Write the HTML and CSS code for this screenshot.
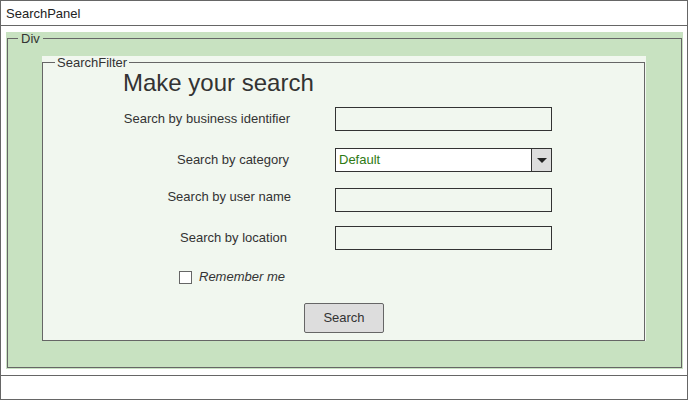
FILE: index.html
```html
<!DOCTYPE html>
<html>
<head>
<meta charset="utf-8">
<link rel="stylesheet" href="styles.css">
</head>
<body>
<div class="panel">
  <div class="panel-header">SearchPanel</div>
  <div class="panel-body">
    <div class="div-box">
      <fieldset class="div-fs">
        <legend>Div</legend>
        <div class="filter-box">
          <fieldset class="filter-fs">
            <legend>SearchFilter</legend>
            <h1 class="title">Make your search</h1>
            <div class="form">
              <div class="row r1"><span class="label">Search by business identifier</span><div class="input"></div></div>
              <div class="row r2"><span class="label">Search by category</span><div class="select"><span class="select-text">Default</span><span class="select-btn"><span class="tri"></span></span></div></div>
              <div class="row r3"><span class="label">Search by user name</span><div class="input"></div></div>
              <div class="row r4"><span class="label">Search by location</span><div class="input"></div></div>
              <div class="check-row"><span class="checkbox"></span><span class="check-label">Remember me</span></div>
              <div class="btn">Search</div>
            </div>
          </fieldset>
        </div>
      </fieldset>
    </div>
  </div>
  <div class="panel-footer"></div>
</div>
</body>
</html>
```

FILE: styles.css
```css
html, body {
  margin: 0;
  padding: 0;
  background: #ffffff;
}
body {
  font-family: "Liberation Sans", Arial, sans-serif;
  font-size: 13px;
  color: #333333;
}
.panel {
  width: 688px;
  height: 400px;
  box-sizing: border-box;
  border: 1px solid #666666;
  display: flex;
  flex-direction: column;
  background: #ffffff;
}
.panel-header {
  height: 24px;
  border-bottom: 1px solid #666666;
  padding-left: 5px;
  line-height: 26px;
  color: #222222;
  flex: none;
}
.panel-body {
  flex: 1;
  padding: 6px 4px 6px 5px;
  display: flex;
  flex-direction: column;
  min-height: 0;
}
.panel-footer {
  height: 23px;
  border-top: 1px solid #666666;
  flex: none;
}
.div-box {
  flex: 1;
  background: #c8e2c1;
  padding: 0 1px 1px 1px;
  display: flex;
  flex-direction: column;
}
.div-fs {
  flex: 1;
  margin: 0;
  border: 1px solid #666666;
  padding: 0 0 0 10px;
  min-width: 0;
}
.div-fs > legend,
.filter-fs > legend {
  padding: 0 3px;
  line-height: 13px;
  font-size: 13px;
  color: #333333;
}
.filter-box {
  margin: 11px 0 0 24px;
  width: 603px;
  background: #f1f7ef;
  padding-right: 1px;
}
.filter-fs {
  margin: 0;
  border: 1px solid #666666;
  padding: 0 0 7px 12px;
  min-width: 0;
}
.filter-fs > legend {
  padding: 0 2px;
}
.title {
  margin: 2px 0 0 68px;
  font-size: 24px;
  line-height: 24px;
  font-weight: normal;
  color: #333333;
}
.form {
  margin-top: 12px;
  display: flex;
  flex-direction: column;
}
.row {
  display: grid;
  grid-template-columns: 236px 217px;
  column-gap: 44px;
  height: 24px;
  align-items: center;
}
.r2 { margin-top: 17px; }
.r3 { margin-top: 16px; }
.r4 { margin-top: 14px; }
.label {
  text-align: right;
  line-height: 15px;
  padding-bottom: 2px;
  color: #333333;
}
.r1 .label { padding-right: 1px; }
.r2 .label { padding-right: 2px; }
.r3 .label { padding-bottom: 8px; }
.r4 .label { padding-right: 4px; }
.input {
  height: 24px;
  box-sizing: border-box;
  border: 1px solid #333333;
}
.select {
  height: 24px;
  box-sizing: border-box;
  border: 1px solid #333333;
  background: #ffffff;
  display: flex;
  align-items: stretch;
}
.select-text {
  flex: 1;
  padding-left: 3px;
  line-height: 22px;
  color: #2f7a14;
}
.select-btn {
  width: 19px;
  border-left: 1px solid #333333;
  background: #dddddd;
  display: flex;
  align-items: center;
  justify-content: center;
}
.tri {
  width: 0;
  height: 0;
  border-left: 5px solid transparent;
  border-right: 5px solid transparent;
  border-top: 5px solid #222222;
}
.check-row {
  margin-top: 15px;
  margin-left: 124px;
  height: 24px;
  display: flex;
  align-items: center;
}
.checkbox {
  width: 11px;
  height: 11px;
  border: 1px solid #666666;
  background: #ffffff;
}
.check-label {
  margin-left: 7px;
  font-style: italic;
  line-height: 15px;
  padding-bottom: 2px;
}
.btn {
  margin-top: 14px;
  margin-left: 249px;
  width: 80px;
  height: 30px;
  box-sizing: border-box;
  border: 1px solid #666666;
  border-radius: 2px;
  background: #dddddd;
  text-align: center;
  line-height: 28px;
  color: #333333;
}
```
